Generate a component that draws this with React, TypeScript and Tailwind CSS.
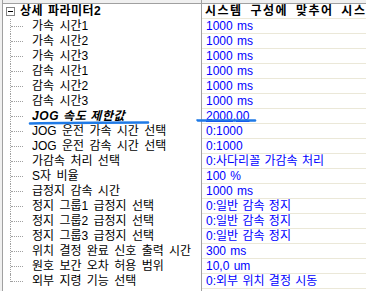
import React from 'react';

type Row = { name: string; value: string; strong?: boolean };

const ROWS: Row[] = [
  { name: '가속 시간1', value: '1000 ms' },
  { name: '가속 시간2', value: '1000 ms' },
  { name: '가속 시간3', value: '1000 ms' },
  { name: '감속 시간1', value: '1000 ms' },
  { name: '감속 시간2', value: '1000 ms' },
  { name: '감속 시간3', value: '1000 ms' },
  { name: 'JOG 속도 제한값', value: '2000,00', strong: true },
  { name: 'JOG 운전 가속 시간 선택', value: '0:1000' },
  { name: 'JOG 운전 감속 시간 선택', value: '0:1000' },
  { name: '가감속 처리 선택', value: '0:사다리꼴 가감속 처리' },
  { name: 'S자 비율', value: '100 %' },
  { name: '급정지 감속 시간', value: '1000 ms' },
  { name: '정지 그룹1 급정지 선택', value: '0:일반 감속 정지' },
  { name: '정지 그룹2 급정지 선택', value: '0:일반 감속 정지' },
  { name: '정지 그룹3 급정지 선택', value: '0:일반 감속 정지' },
  { name: '위치 결정 완료 신호 출력 시간', value: '300 ms' },
  { name: '원호 보간 오차 허용 범위', value: '10,0 um' },
  { name: '외부 지령 기능 선택', value: '0:외부 위치 결정 시동' },
];

const FONT = "font-['Liberation_Sans','Noto_Sans_CJK_KR',sans-serif]";

export default function App() {
  return (
    <div className={`relative h-[291px] w-[366px] overflow-hidden bg-white text-[12px] leading-[15px] text-black ${FONT}`}>
      <div className="flex h-full">
        {/* left frame */}
        <div className="w-[2px] shrink-0 bg-[#f0f0f0]" />
        <div className="w-px shrink-0 bg-[#a0a0a0]" />

        <div className="flex min-w-0 flex-1 flex-col">
          {/* column header, scrolled almost out of view */}
          <div className="flex h-[3px] shrink-0 overflow-hidden bg-[#f0f0f0]">
            <div className="-mt-[12px] w-[198px] shrink-0 text-center">항목</div>
            <div className="w-px shrink-0 bg-[#a0a0a0]" />
            <div className="-mt-[12px] flex-1 text-center">설정값</div>
          </div>
          <div className="h-px shrink-0 bg-[#a0a0a0]" />

          {/* category row */}
          <div className="flex h-[15px] shrink-0">
            <div className="flex w-[198px] shrink-0 items-center">
              <div className="ml-[3px] flex h-[9px] w-[9px] items-center justify-center border border-[#848484] bg-white">
                <div className="h-px w-[5px] bg-black" />
              </div>
              <span className="ml-[5px] font-bold whitespace-nowrap tracking-[0.5px] [word-spacing:1px]">상세 파라미터2</span>
            </div>
            <div className="w-px shrink-0 bg-[#a0a0a0]" />
            <div className="min-w-0 flex-1 overflow-hidden border-b border-[#ebe8d8] pl-[3px] font-bold whitespace-nowrap tracking-[1.5px] [word-spacing:3px]">
              시스템 구성에 맞추어 시스템 파라미터를 설정합니다
            </div>
          </div>

          {ROWS.map((row, i) => {
            const last = i === ROWS.length - 1;
            return (
              <div key={i} className="flex h-[15px] shrink-0">
                <div className="flex w-[198px] shrink-0">
                  <div className="relative w-[29px] shrink-0">
                    <div
                      className={`absolute left-[7px] top-0 border-l border-dotted border-[#a0a0a0] ${last ? 'h-[8px]' : 'h-[15px]'}`}
                    />
                    <div className="absolute left-[8px] top-[7px] w-[12px] border-t border-dotted border-[#a0a0a0]" />
                  </div>
                  <span
                    className={
                      row.strong
                        ? 'whitespace-nowrap font-bold italic tracking-[0.6px]'
                        : 'whitespace-nowrap [word-spacing:2px]'
                    }
                  >
                    {row.name}
                  </span>
                </div>
                <div className="w-px shrink-0 bg-[#a0a0a0]" />
                <div className="min-w-0 flex-1 overflow-hidden border-b border-[#ebe8d8] pl-[4px] whitespace-nowrap text-[#0000ff] [word-spacing:1px]">
                  <span className={row.strong ? 'underline' : ''}>{row.value}</span>
                </div>
              </div>
            );
          })}

          <div className="flex h-[15px] shrink-0">
            <div className="w-[198px] shrink-0" />
            <div className="w-px shrink-0 bg-[#a0a0a0]" />
            <div className="flex-1 border-b border-[#ebe8d8]" />
          </div>
        </div>
      </div>

      {/* hand-drawn marker strokes over the JOG row */}
      <svg className="pointer-events-none absolute inset-0" width="366" height="291">
        <path d="M30 123.5 C70 122.5 110 122.5 148 122.5" stroke="#1f7ae6" strokeWidth="2.6" strokeLinecap="round" fill="none" />
        <path d="M198 120.5 L255 120.5" stroke="#1f7ae6" strokeWidth="2.6" strokeLinecap="round" fill="none" />
        <circle cx="197" cy="120" r="0.8" fill="#1f7ae6" />
      </svg>
    </div>
  );
}
